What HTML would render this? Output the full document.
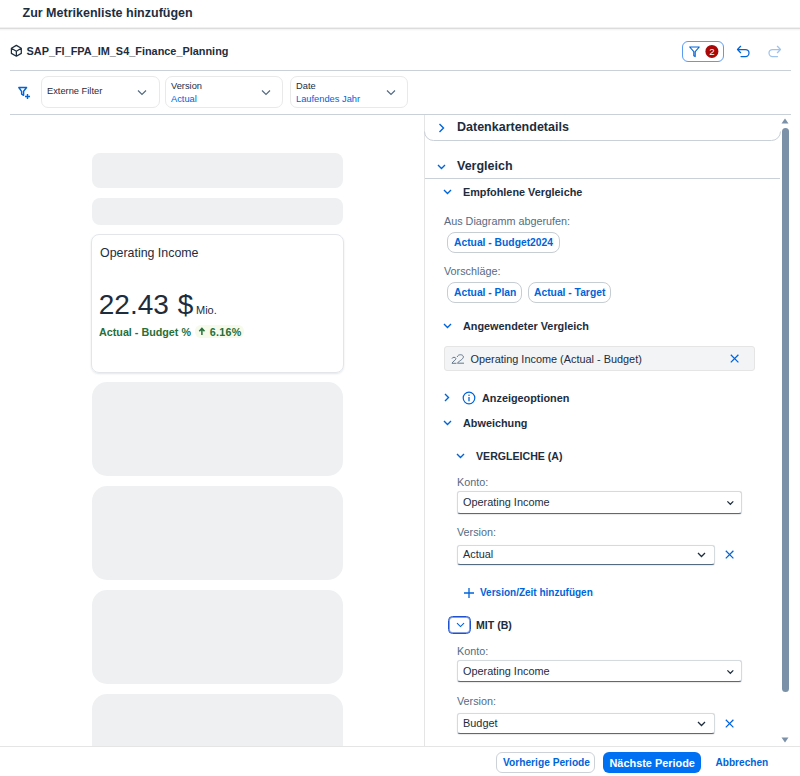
<!DOCTYPE html>
<html><head><meta charset="utf-8">
<style>
*{box-sizing:border-box;margin:0;padding:0}
html,body{width:800px;height:776px;overflow:hidden;background:#fff;font-family:"Liberation Sans",sans-serif;color:#1d2d3e}
.a{position:absolute}
.t{position:absolute;white-space:nowrap;line-height:1}
.b{font-weight:bold}
.sk{position:absolute;left:91.6px;width:251.6px;background:#eef0f2}
.lbl{color:#556b82}
.blue{color:#0064d9}
.sel{position:absolute;background:#fff;border:1px solid #d5dadd;border-bottom:1px solid #556b82;border-radius:3px;box-shadow:0 0 1px rgba(0,0,0,.1),0 1px 1px rgba(0,0,0,.08)}
.chip{position:absolute;height:20px;border:1px solid #c6cdd3;border-radius:8px;background:#fff}
</style></head>
<body>
<!-- header -->
<div class="t b" style="left:22.5px;top:7px;font-size:12.5px">Zur Metrikenliste hinzufügen</div>
<div class="a" style="left:0;top:27px;width:800px;height:4px;background:linear-gradient(#f0f0f0 0,#f0f0f0 1px,#dcdcdc 1px,#dcdcdc 2px,#f5f5f5 2px,#f5f5f5 3px,#fbfbfb 3px)"></div>

<!-- model row -->
<svg class="a" style="left:10px;top:44px" width="13" height="14" viewBox="0 0 13 14"><path d="M6.35 1.4 L11.3 4.3 V9.4 L6.35 12.2 L1.4 9.4 V4.3 Z M1.4 4.3 L6.35 7.2 L11.3 4.3 M6.35 7.2 V12.2" fill="none" stroke="#1d2d3e" stroke-width="1.25" stroke-linejoin="round"/></svg>
<div class="t b" style="left:26.5px;top:45.6px;font-size:10.9px">SAP_FI_FPA_IM_S4_Finance_Planning</div>

<div class="a" style="left:682px;top:41px;width:42px;height:21px;border:1px solid #5b9cf0;border-radius:6px"></div>
<svg class="a" style="left:689px;top:45.5px" width="11" height="12" viewBox="0 0 11 12"><path d="M0.7 1 H10.3 L6.2 5.6 V10.6 L4.8 9.7 V5.6 Z" fill="none" stroke="#0064d9" stroke-width="1.1" stroke-linejoin="round"/></svg>
<svg class="a" style="left:700px;top:40px" width="24" height="24" viewBox="0 0 24 24"><circle cx="11.9" cy="11.45" r="6.5" fill="#aa0808"/></svg>
<div class="t" style="left:705.4px;top:46.5px;width:13px;text-align:center;font-size:9.6px;color:#fff">2</div>
<svg class="a" style="left:736px;top:45px" width="15" height="13" viewBox="0 0 15 13"><path d="M4.6 1.3 L1.5 4.5 L4.6 7.7 M1.5 4.5 H9.5 A3.5 3.5 0 0 1 9.5 11.5 H5" fill="none" stroke="#0064d9" stroke-width="1.25" stroke-linecap="round" stroke-linejoin="round"/></svg>
<svg class="a" style="left:767px;top:45px" width="15" height="13" viewBox="0 0 15 13"><path d="M10.4 1.3 L13.5 4.5 L10.4 7.7 M13.5 4.5 H5.5 A3.5 3.5 0 0 0 5.5 11.5 H10.5" fill="none" stroke="#9fc3ef" stroke-width="1.25" stroke-linecap="round" stroke-linejoin="round"/></svg>

<div class="a" style="left:10px;top:70px;width:781px;height:1px;background:#c9d0d8"></div>

<!-- filter row -->
<svg class="a" style="left:17px;top:85.5px" width="14" height="14" viewBox="0 0 14 14"><path d="M1.8 1.5 H9.6 L6.6 5.3 V9.3 L4.6 8.1 V5.3 Z" fill="none" stroke="#0064d9" stroke-width="1.4" stroke-linejoin="round"/><path d="M10.5 8 V13 M8 10.5 H13" stroke="#0064d9" stroke-width="1.4"/></svg>
<div class="a" style="left:41px;top:76px;width:119px;height:32px;border:1px solid #e9e9e9;border-radius:7px"></div>
<div class="t" style="left:47px;top:87px;font-size:9.3px">Externe Filter</div>
<svg class="a" style="left:137px;top:89px" width="10" height="7" viewBox="0 0 10 7"><path d="M1 1.5 L5 5.5 L9 1.5" fill="none" stroke="#556b82" stroke-width="1.2"/></svg>

<div class="a" style="left:165px;top:76px;width:118px;height:32px;border:1px solid #e9e9e9;border-radius:7px"></div>
<div class="t" style="left:171px;top:82px;font-size:9.3px">Version</div>
<div class="t blue" style="left:171px;top:95px;font-size:9.3px">Actual</div>
<svg class="a" style="left:261px;top:89px" width="10" height="7" viewBox="0 0 10 7"><path d="M1 1.5 L5 5.5 L9 1.5" fill="none" stroke="#556b82" stroke-width="1.2"/></svg>

<div class="a" style="left:290px;top:76px;width:118px;height:32px;border:1px solid #e9e9e9;border-radius:7px"></div>
<div class="t" style="left:296px;top:82px;font-size:9.3px">Date</div>
<div class="t blue" style="left:296px;top:95px;font-size:9.3px">Laufendes Jahr</div>
<svg class="a" style="left:386px;top:89px" width="10" height="7" viewBox="0 0 10 7"><path d="M1 1.5 L5 5.5 L9 1.5" fill="none" stroke="#556b82" stroke-width="1.2"/></svg>

<div class="a" style="left:10px;top:114px;width:781px;height:1px;background:#c9d0d8"></div>

<!-- left panel -->
<div class="sk" style="top:153px;height:35px;border-radius:8px"></div>
<div class="sk" style="top:198px;height:27px;border-radius:8px"></div>
<div class="a" style="left:91px;top:234px;width:253px;height:139px;border:1px solid #e2e6ea;border-radius:8px;box-shadow:0 1px 2px rgba(30,50,80,.12)"></div>
<div class="t" style="left:100px;top:247px;font-size:12.4px">Operating Income</div>
<div class="t" style="left:98.8px;top:290.5px;font-size:28px;word-spacing:1px">22.43 $</div>
<div class="t" style="left:196px;top:305px;font-size:11px">Mio.</div>
<div class="t b" style="left:99px;top:326.5px;font-size:10.75px;color:#256f3a">Actual - Budget %</div>
<div class="a" style="left:194.7px;top:325px;width:49px;height:12.6px;border-radius:6px;background:#f5faeb"></div>
<svg class="a" style="left:198px;top:327px" width="8" height="10" viewBox="0 0 8 10"><path d="M3.9 8 V1.5 M1.3 4.2 L3.9 1.4 L6.5 4.2" fill="none" stroke="#256f3a" stroke-width="1.5"/></svg><div class="t b" style="left:209.8px;top:326.5px;font-size:10.75px;letter-spacing:0.25px;color:#256f3a">6.16%</div>

<div class="sk" style="top:382px;height:94.2px;border-radius:15px"></div>
<div class="sk" style="top:486px;height:94.2px;border-radius:15px"></div>
<div class="sk" style="top:590px;height:94.2px;border-radius:15px"></div>
<div class="sk" style="top:694px;height:94.2px;border-radius:15px"></div>

<!-- right panel -->
<div class="a" style="left:424px;top:115px;width:1px;height:631px;background:#e5e5e5"></div>
<svg class="a" style="left:420px;top:115px" width="370" height="30" viewBox="0 0 370 30"><path d="M4.5 16.5 A9 9 0 0 0 13.5 25.5 H351.5 A9 9 0 0 0 360.5 16.5" fill="none" stroke="#c9d0d8" stroke-width="1"/></svg>

<svg class="a" style="left:438px;top:123px" width="7" height="10" viewBox="0 0 7 10"><path d="M1.5 1 L5.5 5 L1.5 9" fill="none" stroke="#0064d9" stroke-width="1.4"/></svg>
<div class="t b" style="left:457px;top:121px;font-size:12.5px">Datenkartendetails</div>

<svg class="a" style="left:437px;top:164px" width="9" height="6" viewBox="0 0 9 6"><path d="M1 1 L4.5 4.5 L8 1" fill="none" stroke="#0064d9" stroke-width="1.4"/></svg>
<div class="t b" style="left:457px;top:160.25px;font-size:12.5px">Vergleich</div>
<div class="a" style="left:425px;top:178px;width:355px;height:1px;background:#c9d0d8"></div>

<svg class="a" style="left:443px;top:189px" width="9" height="6" viewBox="0 0 9 6"><path d="M1 1 L4.5 4.5 L8 1" fill="none" stroke="#0064d9" stroke-width="1.4"/></svg>
<div class="t b" style="left:463px;top:187px;font-size:10.85px">Empfohlene Vergleiche</div>

<div class="t lbl" style="left:444px;top:215.75px;font-size:10.8px">Aus Diagramm abgerufen:</div>
<div class="chip" style="left:447px;top:232px;width:113px;height:20.5px"></div>
<div class="t b blue" style="left:454px;top:237.75px;font-size:10.3px">Actual - Budget2024</div>
<div class="t lbl" style="left:444px;top:265.75px;font-size:10.8px">Vorschläge:</div>
<div class="chip" style="left:447px;top:281.5px;width:75px;height:21px"></div>
<div class="t b blue" style="left:454px;top:287.5px;font-size:10.3px">Actual - Plan</div>
<div class="chip" style="left:528px;top:281.5px;width:83px;height:21px"></div>
<div class="t b blue" style="left:534px;top:287.5px;font-size:10.3px">Actual - Target</div>

<svg class="a" style="left:443px;top:323px" width="9" height="6" viewBox="0 0 9 6"><path d="M1 1 L4.5 4.5 L8 1" fill="none" stroke="#0064d9" stroke-width="1.4"/></svg>
<div class="t b" style="left:463px;top:321px;font-size:10.85px">Angewendeter Vergleich</div>

<div class="a" style="left:444px;top:346px;width:311px;height:25px;background:#f2f4f6;border:1px solid #e5e5e5;border-radius:3px"></div>
<svg class="a" style="left:450px;top:352.5px" width="16" height="13" viewBox="0 0 16 13"><path d="M2 5.6 C2.2 3.9 5.8 3.8 5.9 5.6 C6 7.2 2.4 8.6 2 10.3 H6.4" fill="none" stroke="#556b82" stroke-width="0.9"/><path d="M7.3 3.9 C7.5 1.2 13.3 0.9 13.4 3.9 C13.5 6.2 8.5 8.3 7.3 10.2 H14" fill="none" stroke="#556b82" stroke-width="0.9"/></svg>
<div class="t" style="left:470.5px;top:354px;font-size:10.9px">Operating Income (Actual - Budget)</div>
<svg class="a" style="left:729.2px;top:353.3px" width="11" height="11" viewBox="0 0 11 11"><path d="M1.8 1.8 L9.4 9.4 M9.4 1.8 L1.8 9.4" stroke="#0064d9" stroke-width="1.25"/></svg>

<svg class="a" style="left:444px;top:393px" width="6" height="9" viewBox="0 0 6 9"><path d="M1 1 L4.5 4.5 L1 8" fill="none" stroke="#0064d9" stroke-width="1.4"/></svg>
<svg class="a" style="left:462px;top:391px" width="14" height="14" viewBox="0 0 14 14"><circle cx="7" cy="7" r="5.8" fill="none" stroke="#0064d9" stroke-width="1.2"/><path d="M7 6 V10.2" stroke="#0064d9" stroke-width="1.3"/><circle cx="7" cy="4.2" r=".8" fill="#0064d9"/></svg>
<div class="t b" style="left:482px;top:393px;font-size:10.85px">Anzeigeoptionen</div>

<svg class="a" style="left:443px;top:420px" width="9" height="6" viewBox="0 0 9 6"><path d="M1 1 L4.5 4.5 L8 1" fill="none" stroke="#0064d9" stroke-width="1.4"/></svg>
<div class="t b" style="left:463px;top:418px;font-size:10.85px">Abweichung</div>

<svg class="a" style="left:456px;top:453px" width="9" height="6" viewBox="0 0 9 6"><path d="M1 1 L4.5 4.5 L8 1" fill="none" stroke="#0064d9" stroke-width="1.4"/></svg>
<div class="t b" style="left:476px;top:451px;font-size:10.6px">VERGLEICHE (A)</div>

<div class="t lbl" style="left:457px;top:477px;font-size:10.8px">Konto:</div>
<div class="sel" style="left:457px;top:491px;width:285px;height:22.5px"></div>
<div class="t" style="left:463px;top:497px;font-size:10.9px">Operating Income</div>
<svg class="a" style="left:726px;top:499.5px" width="9" height="6" viewBox="0 0 9 6"><path d="M1.4 1.4 L4.35 4.3 L7.3 1.4" fill="none" stroke="#1d2d3e" stroke-width="1.2"/></svg>

<div class="t lbl" style="left:457px;top:527px;font-size:10.8px">Version:</div>
<div class="sel" style="left:457px;top:544.5px;width:258px;height:20px"></div>
<div class="t" style="left:463px;top:549px;font-size:10.9px">Actual</div>
<svg class="a" style="left:697px;top:551.7px" width="9" height="6" viewBox="0 0 9 6"><path d="M1 1 L4.5 4.5 L8 1" fill="none" stroke="#1d2d3e" stroke-width="1.3"/></svg>
<svg class="a" style="left:724px;top:549px" width="11" height="11" viewBox="0 0 11 11"><path d="M1.8 1.8 L9.4 9.4 M9.4 1.8 L1.8 9.4" stroke="#0064d9" stroke-width="1.25"/></svg>

<svg class="a" style="left:463px;top:587px" width="12" height="12" viewBox="0 0 12 12"><path d="M6 1 V11 M1 6 H11" stroke="#0064d9" stroke-width="1.3"/></svg>
<div class="t b blue" style="left:480px;top:588px;font-size:10px">Version/Zeit hinzufügen</div>

<div class="a" style="left:448px;top:616px;width:23px;height:18px;border:1px solid #1f52cc;box-shadow:inset 0 0 0 1px rgba(31,82,204,.55);border-radius:4.5px"></div>
<svg class="a" style="left:455.5px;top:621.5px" width="9" height="6" viewBox="0 0 9 6"><path d="M1 1.2 L4.5 4.6 L8 1.2" fill="none" stroke="#0064d9" stroke-width="1.1"/></svg>
<div class="t b" style="left:476px;top:620px;font-size:10.6px">MIT (B)</div>

<div class="t lbl" style="left:457px;top:646px;font-size:10.8px">Konto:</div>
<div class="sel" style="left:457px;top:660px;width:285px;height:22px"></div>
<div class="t" style="left:463px;top:666px;font-size:10.9px">Operating Income</div>
<svg class="a" style="left:726px;top:668.5px" width="9" height="6" viewBox="0 0 9 6"><path d="M1.4 1.4 L4.35 4.3 L7.3 1.4" fill="none" stroke="#1d2d3e" stroke-width="1.2"/></svg>

<div class="t lbl" style="left:457px;top:696px;font-size:10.8px">Version:</div>
<div class="sel" style="left:457px;top:713px;width:258px;height:21px"></div>
<div class="t" style="left:463px;top:718px;font-size:10.9px">Budget</div>
<svg class="a" style="left:697px;top:720.7px" width="9" height="6" viewBox="0 0 9 6"><path d="M1 1 L4.5 4.5 L8 1" fill="none" stroke="#1d2d3e" stroke-width="1.3"/></svg>
<svg class="a" style="left:724px;top:718px" width="11" height="11" viewBox="0 0 11 11"><path d="M1.8 1.8 L9.4 9.4 M9.4 1.8 L1.8 9.4" stroke="#0064d9" stroke-width="1.25"/></svg>

<!-- scrollbar -->
<svg class="a" style="left:781px;top:118px" width="8" height="6" viewBox="0 0 8 6"><path d="M4 0.5 L7.5 5.5 H0.5 Z" fill="#7b91a8"/></svg>
<div class="a" style="left:782px;top:128px;width:7px;height:564px;border-radius:4px;background:#7b91a8"></div>
<svg class="a" style="left:781px;top:737px" width="8" height="6" viewBox="0 0 8 6"><path d="M0.5 0.5 H7.5 L4 5.5 Z" fill="#7b91a8"/></svg>

<!-- footer -->
<div class="a" style="left:0;top:746px;width:800px;height:30px;background:#fff;border-top:1px solid #e5e5e5"></div>
<div class="a" style="left:496px;top:752px;width:99px;height:21px;border:1px solid #ccd2d8;border-radius:6px"></div>
<div class="t b blue" style="left:503px;top:758px;font-size:10.2px">Vorherige Periode</div>
<div class="a" style="left:603px;top:752px;width:98px;height:21px;background:#0070f2;border-radius:6px"></div>
<div class="t b" style="left:609.5px;top:758px;font-size:10.9px;color:#fff">Nächste Periode</div>
<div class="t b blue" style="left:715.5px;top:758px;font-size:10.1px">Abbrechen</div>
</body></html>
